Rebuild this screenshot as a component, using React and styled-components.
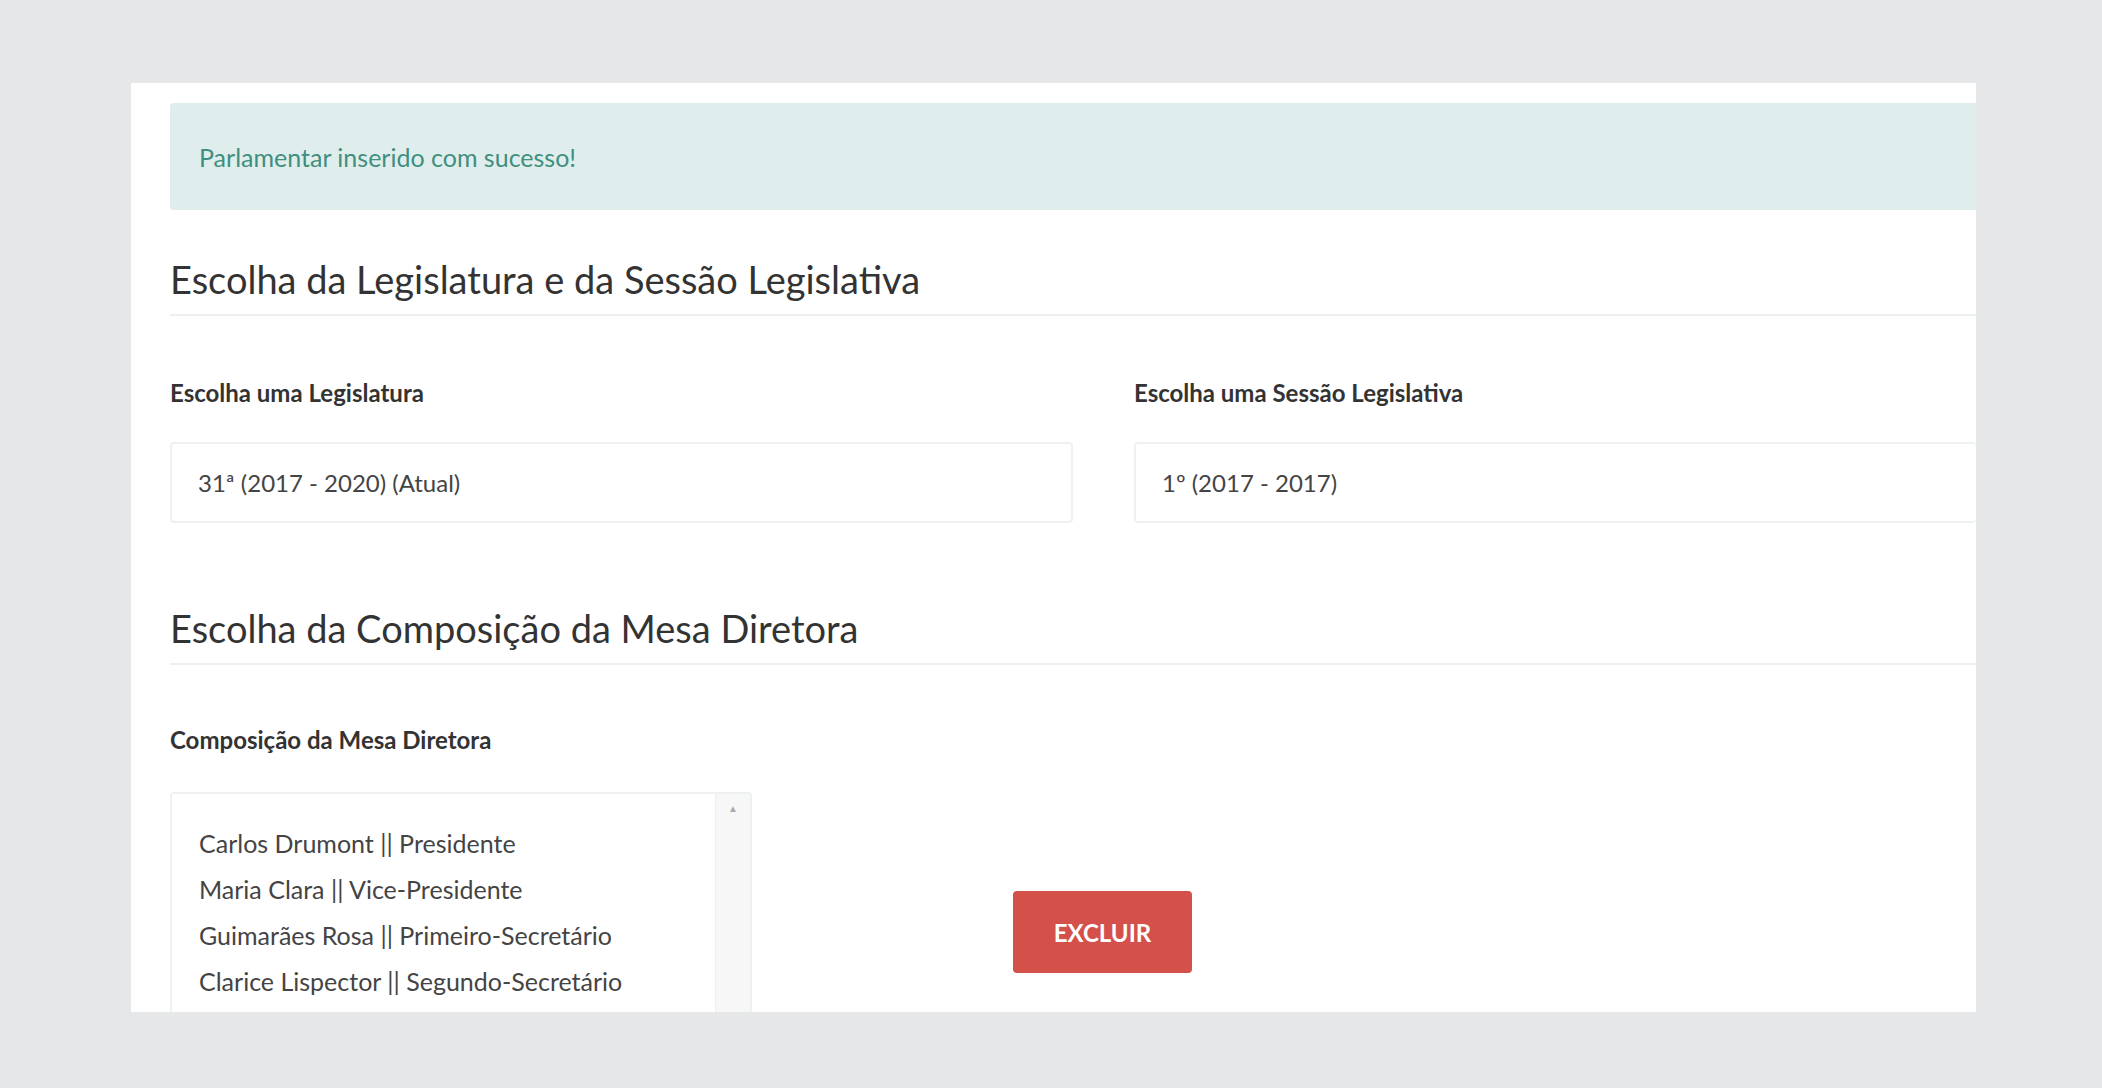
import React from "react";
import styled, { createGlobalStyle } from "styled-components";

const G = createGlobalStyle`
  html,body{margin:0;background:#e6e7e9;font-family:Lato,"Open Sans",sans-serif;}
`;
const Page = styled.div`width:2102px;height:1088px;padding:83px 126px 76px 131px;box-sizing:border-box;`;
const Panel = styled.div`background:#fff;height:929px;overflow:hidden;padding:20px 0 0 39px;box-sizing:border-box;`;
const Alert = styled.div`background:#dfeeed;color:#3f8f80;font-size:25px;height:107px;display:flex;align-items:center;padding-left:29px;border-radius:4px 0 0 4px;`;
const Heading = styled.h2`margin:${p=>p.$top}px 0 0;font-weight:400;font-size:38px;color:#333;padding-bottom:12px;border-bottom:2px solid #eef0f0;`;
const Row = styled.div`display:flex;gap:61px;margin-top:62px;`;
const Field = styled.div`flex:${p=>p.$flex};display:flex;flex-direction:column;`;
const Label = styled.div`font-weight:700;font-size:24px;color:#333;margin-bottom:${p=>p.$mb ?? 35}px;`;
const Input = styled.div`height:77px;border:2px solid #eef1f1;border-right:${p=>p.$open?"none":"2px solid #eef1f1"};border-radius:4px;display:flex;align-items:center;padding-left:26px;font-size:24px;color:#444;`;
const Bottom = styled.div`display:flex;align-items:flex-start;margin-top:60px;`;
const ListWrap = styled.div`display:flex;flex-direction:column;`;
const ListBox = styled.div`width:582px;height:240px;border:2px solid #eef1f1;border-bottom:none;border-radius:4px 4px 0 0;display:flex;box-sizing:border-box;`;
const Items = styled.div`flex:1;padding:26px 0 0 27px;font-size:25px;color:#444;line-height:46px;white-space:nowrap;`;
const Scroll = styled.div`width:34px;background:#f7f7f7;border-left:1px solid #eee;display:flex;justify-content:center;padding-top:8px;color:#aaa;font-size:10px;`;
const Button = styled.button`margin:166px 0 0 261px;width:179px;height:82px;background:#d4504b;border:none;border-radius:4px;color:#fff;font-family:inherit;font-weight:700;font-size:24px;`;

export default function App(){
  return <Page><G/><Panel>
    <Alert>Parlamentar inserido com sucesso!</Alert>
    <Heading $top={46}>Escolha da Legislatura e da Sessão Legislativa</Heading>
    <Row>
      <Field $flex="0 0 903px"><Label>Escolha uma Legislatura</Label><Input>31ª (2017 - 2020) (Atual)</Input></Field>
      <Field $flex="1"><Label>Escolha uma Sessão Legislativa</Label><Input $open>1º (2017 - 2017)</Input></Field>
    </Row>
    <Heading $top={82}>Escolha da Composição da Mesa Diretora</Heading>
    <Bottom>
      <ListWrap>
        <Label $mb={38}>Composição da Mesa Diretora</Label>
        <ListBox>
          <Items>
            <div>Carlos Drumont || Presidente</div>
            <div>Maria Clara || Vice-Presidente</div>
            <div>Guimarães Rosa || Primeiro-Secretário</div>
            <div>Clarice Lispector || Segundo-Secretário</div>
          </Items>
          <Scroll>▲</Scroll>
        </ListBox>
      </ListWrap>
      <Button>EXCLUIR</Button>
    </Bottom>
  </Panel></Page>;
}
